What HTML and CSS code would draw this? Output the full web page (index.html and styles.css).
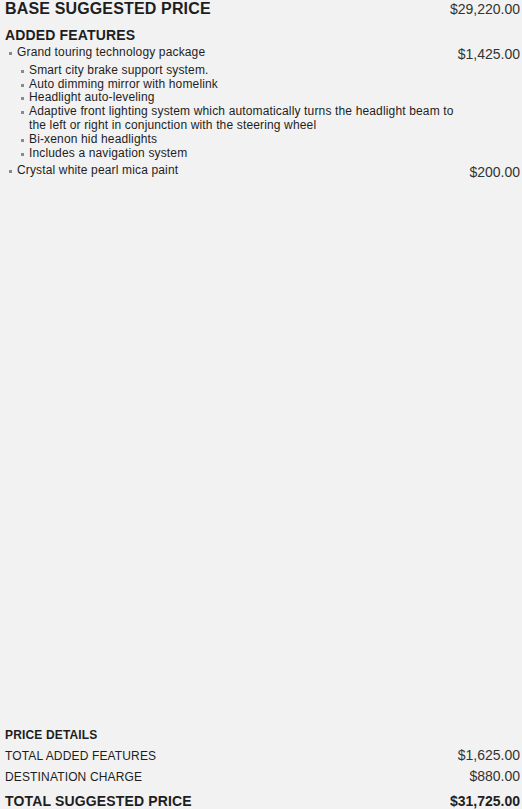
FILE: index.html
```html
<!DOCTYPE html>
<html lang="en">
<head>
  <meta charset="UTF-8" />
  <meta name="viewport" content="width=device-width, initial-scale=1.0"/>
  <title>Price summary</title>
  <link rel="stylesheet" href="styles.css">
</head>
<body>
  <div class="summary">
    <div class="base-row">
      <h1>BASE SUGGESTED PRICE</h1>
      <span class="price">$29,220.00</span>
    </div>

    <h2>ADDED FEATURES</h2>
    <ul class="features">
      <li class="feature">
        <div class="feature-main">
          <div class="feature-name">
            <span class="bullet">Grand touring technology package</span>
            <ul class="sub-features">
              <li class="bullet">Smart city brake support system.</li>
              <li class="bullet">Auto dimming mirror with homelink</li>
              <li class="bullet">Headlight auto-leveling</li>
              <li class="bullet">Adaptive front lighting system which automatically turns the headlight beam to the left or right in conjunction with the steering wheel</li>
              <li class="bullet">Bi-xenon hid headlights</li>
              <li class="bullet">Includes a navigation system</li>
            </ul>
          </div>
          <span class="price">$1,425.00</span>
        </div>
      </li>
      <li class="feature">
        <div class="feature-main">
          <div class="feature-name">
            <span class="bullet">Crystal white pearl mica paint</span>
          </div>
          <span class="price">$200.00</span>
        </div>
      </li>
    </ul>

    <div class="details">
      <h3>PRICE DETAILS</h3>
      <div class="detail-row">
        <span>TOTAL ADDED FEATURES</span>
        <span class="price">$1,625.00</span>
      </div>
      <div class="detail-row">
        <span>DESTINATION CHARGE</span>
        <span class="price">$880.00</span>
      </div>
      <div class="total-row">
        <span>TOTAL SUGGESTED PRICE</span>
        <span class="price">$31,725.00</span>
      </div>
    </div>
  </div>
</body>
</html>
```

FILE: styles.css
```css
:root {
  --bg: #f2f2f2;
  --text: #1e1e1e;
  --price: #333;
  --bullet: #8a8a8a;
}
body {
  margin: 0;
  background-color: var(--bg);
  color: var(--text);
  font-family: "Liberation Sans", Arial, sans-serif;
  letter-spacing: 0.15px;
}
.summary {
  display: flex;
  flex-direction: column;
  min-height: 100vh;
  padding: 0 2px 0 5px;
  box-sizing: border-box;
}
.price {
  font-size: 14px;
  color: var(--price);
  white-space: nowrap;
  letter-spacing: 0;
}
.base-row {
  display: flex;
  justify-content: space-between;
  align-items: baseline;
}
.base-row h1 {
  margin: 0;
  font-size: 16px;
  line-height: 17px;
}
h2 {
  margin: 10px 0 3px;
  font-size: 14px;
  line-height: 16px;
}
.features,
.sub-features {
  list-style: none;
  margin: 0;
  padding: 0;
}
.feature {
  font-size: 12px;
  line-height: 13.8px;
  margin-bottom: 4px;
}
.feature-main {
  display: flex;
  justify-content: space-between;
  align-items: flex-start;
}
.feature-main .price {
  margin-top: 1px;
  line-height: 15px;
}
.feature-name {
  max-width: 460px;
}
.bullet {
  display: block;
  position: relative;
  padding-left: 12px;
}
.bullet::before {
  content: "";
  position: absolute;
  left: 4px;
  top: 6px;
  width: 3px;
  height: 3px;
  background-color: var(--bullet);
}
.sub-features {
  margin-top: 4px;
  padding-left: 12px;
}
.details {
  margin-top: auto;
}
.details h3 {
  margin: 0 0 5px;
  font-size: 12px;
  line-height: 14px;
}
.detail-row,
.total-row {
  display: flex;
  justify-content: space-between;
  align-items: baseline;
}
.detail-row {
  font-size: 12px;
  line-height: 16px;
  margin-bottom: 4px;
}
.total-row {
  margin-top: 9px;
  font-size: 14px;
  font-weight: bold;
  line-height: 15px;
}
.total-row .price {
  font-weight: bold;
  color: var(--text);
}
```
